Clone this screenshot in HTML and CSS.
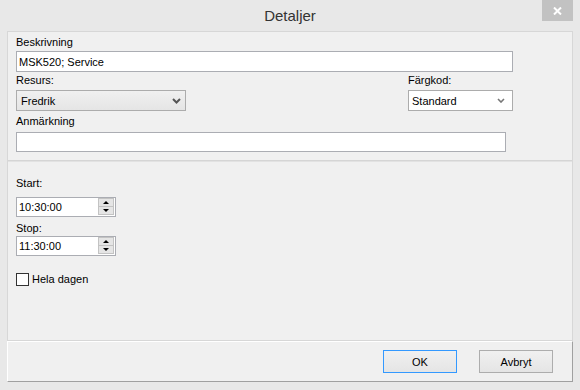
FILE: index.html
```html
<!DOCTYPE html>
<html lang="sv">
<head>
  <meta charset="UTF-8">
  <title>Detaljer</title>
  <link rel="stylesheet" href="styles.css">
</head>
<body>
  <div class="window">
    <div class="titlebar">
      <div class="title">Detaljer</div>
      <div class="close">
        <svg width="9" height="8" viewBox="0 0 9 8"><path d="M1 0.5 L8 7.5 M8 0.5 L1 7.5" stroke="#fff" stroke-width="2"/></svg>
      </div>
    </div>

    <div class="panel">
      <div class="details">
        <label class="label label-first">Beskrivning</label>
        <input class="field field-wide" type="text" value="MSK520; Service">

        <div class="row">
          <div>
            <label class="label">Resurs:</label>
            <div class="combo combo-resurs">
              <span>Fredrik</span>
              <svg width="9" height="6" viewBox="0 0 9 6"><path d="M1 1 L4.5 4.5 L8 1" fill="none" stroke="#555" stroke-width="2"/></svg>
            </div>
          </div>
          <div>
            <label class="label">Färgkod:</label>
            <div class="combo combo-color">
              <span>Standard</span>
              <svg width="8" height="5" viewBox="0 0 8 5"><path d="M1 1 L4 4 L7 1" fill="none" stroke="#777" stroke-width="1.6"/></svg>
            </div>
          </div>
        </div>

        <label class="label label-note">Anmärkning</label>
        <input class="field field-note" type="text" value="">
      </div>

      <div class="divider"></div>

      <div class="times">
        <label class="label label-start">Start:</label>
        <div class="spin spin-start">
          <input type="text" value="10:30:00">
          <div class="spin-buttons">
            <div class="spin-btn"><span class="arrow-up"></span></div>
            <div class="spin-btn"><span class="arrow-down"></span></div>
          </div>
        </div>

        <label class="label label-stop">Stop:</label>
        <div class="spin spin-stop">
          <input type="text" value="11:30:00">
          <div class="spin-buttons">
            <div class="spin-btn"><span class="arrow-up"></span></div>
            <div class="spin-btn"><span class="arrow-down"></span></div>
          </div>
        </div>

        <div class="check-row">
          <span class="checkbox"></span>
          <span>Hela dagen</span>
        </div>
      </div>
    </div>

    <div class="buttons">
      <button class="btn btn-default">OK</button>
      <button class="btn">Avbryt</button>
    </div>
  </div>
</body>
</html>
```

FILE: styles.css
```css
* {
  box-sizing: border-box;
}

body {
  margin: 0;
  background-color: #e8e8e8;
  font-family: "Liberation Sans", Arial, sans-serif;
  font-size: 11px;
  color: #000;
}

.window {
  width: 580px;
  height: 390px;
  display: flex;
  flex-direction: column;
  padding: 0 7px 8px;
}

/* title bar */
.titlebar {
  height: 31px;
  flex-shrink: 0;
  display: grid;
  grid-template-columns: 1fr auto 1fr;
  align-items: start;
}

.title {
  grid-column: 2;
  padding-top: 7px;
  font-size: 15px;
  line-height: 17px;
  color: #333;
}

.close {
  grid-column: 3;
  justify-self: end;
  width: 31px;
  height: 21px;
  background-color: #c2c2c2;
  display: flex;
  align-items: center;
  justify-content: center;
}

/* main panel */
.panel {
  flex: 1;
  background-color: #f0f0f0;
  border: 1px solid #d7d7d7;
  display: flex;
  flex-direction: column;
}

.details {
  height: 128px;
  flex-shrink: 0;
  padding-left: 8px;
}

.label {
  display: block;
  height: 13px;
  line-height: 13px;
}

.label-first {
  margin-top: 4px;
}

.field {
  display: block;
  height: 21px;
  margin: 2px 0 0;
  padding: 0 2px;
  border: 1px solid #abadb3;
  background-color: #fff;
  font: inherit;
  color: #000;
  outline: none;
}

.field-wide {
  width: 497px;
}

.field-note {
  width: 490px;
  height: 20px;
  margin-top: 4px;
}

.label-note {
  margin-top: 4px;
}

.row {
  width: 497px;
  margin-top: 2px;
  display: flex;
  justify-content: space-between;
}

.combo {
  height: 21px;
  margin-top: 3px;
  border: 1px solid #acacac;
  display: flex;
  align-items: center;
  justify-content: space-between;
}

.combo-resurs {
  width: 170px;
  padding: 0 4px 0 4px;
  background: linear-gradient(#f0f0f0, #e5e5e5);
}

.combo-color {
  width: 105px;
  padding: 0 7px 0 3px;
  background-color: #fff;
}

.divider {
  flex-shrink: 0;
  border-top: 1px solid #d5d5d5;
  border-bottom: 1px solid #e2e2e2;
}

/* time fields */
.times {
  flex: 1;
  padding-left: 8px;
}

.label-start {
  margin-top: 15px;
}

.label-stop {
  margin-top: 5px;
}

.spin {
  width: 100px;
  height: 20px;
  border: 1px solid #abadb3;
  background-color: #fff;
  display: flex;
}

.spin-start {
  margin-top: 7px;
}

.spin-stop {
  margin-top: 1px;
}

.spin input {
  flex: 1;
  min-width: 0;
  border: none;
  padding: 0 2px;
  font: inherit;
  color: #000;
  outline: none;
  background: transparent;
}

.spin-buttons {
  width: 16px;
  margin: 0 1px 1px 0;
  display: flex;
  flex-direction: column;
}

.spin-btn {
  flex: 1;
  background-color: #e5e5e5;
  border: 1px solid #c3c3c3;
  display: flex;
  align-items: center;
  justify-content: center;
}

.spin-btn + .spin-btn {
  border-top: none;
}

.arrow-up {
  width: 0;
  height: 0;
  border-left: 3px solid transparent;
  border-right: 3px solid transparent;
  border-bottom: 3px solid #000;
}

.arrow-down {
  width: 0;
  height: 0;
  border-left: 3px solid transparent;
  border-right: 3px solid transparent;
  border-top: 3px solid #000;
}

.check-row {
  margin-top: 17px;
  display: flex;
  align-items: center;
  gap: 3px;
  line-height: 13px;
}

.checkbox {
  width: 13px;
  height: 13px;
  border: 1px solid #333;
  background-color: #fff;
}

/* bottom button bar */
.buttons {
  height: 41px;
  flex-shrink: 0;
  background-color: #f0f0f0;
  border: 1px solid;
  border-color: #fff #a0a0a0 #a0a0a0 #fff;
  display: flex;
  justify-content: flex-end;
  align-items: center;
  gap: 22px;
  padding-right: 19px;
}

.btn {
  width: 74px;
  height: 23px;
  padding: 0;
  border: 1px solid #adadad;
  background: linear-gradient(#f0f0f0, #e5e5e5);
  font: inherit;
  color: #000;
}

.btn-default {
  border-color: #3399ff;
}
```
